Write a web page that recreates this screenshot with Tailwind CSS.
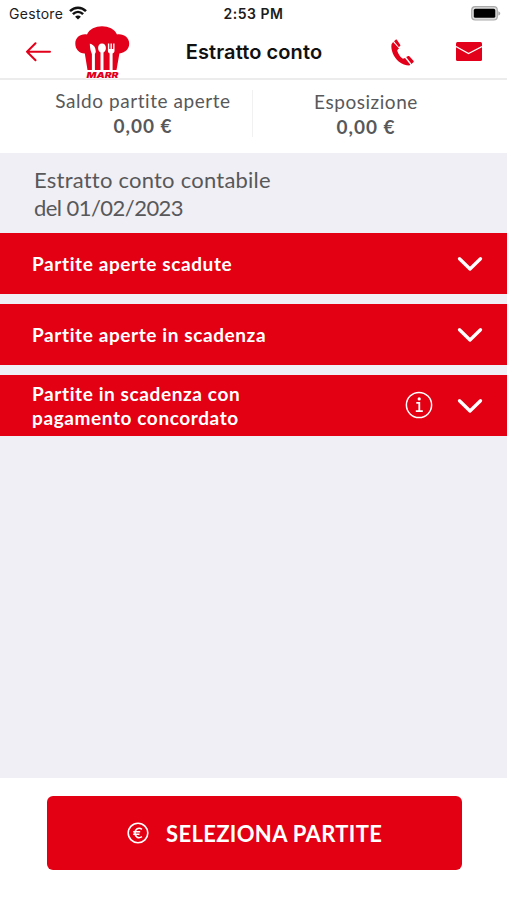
<!DOCTYPE html>
<html lang="it">
<head>
    <meta charset="UTF-8">
    <meta name="viewport" content="width=device-width, initial-scale=1.0">
    <title>Estratto conto</title>
    <script src="https://cdn.jsdelivr.net/npm/@tailwindcss/browser@4"></script>
</head>
<body class="bg-white w-full h-screen flex flex-col overflow-hidden font-['Lato',sans-serif] text-[#58585a]">

    <!-- Status bar -->
    <div class="h-[27px] shrink-0 grid grid-cols-3 items-center pl-[9px] pr-[6px] font-['Inter',sans-serif] text-[14px] leading-none text-[#1c1c1c]">
        <div class="flex items-center gap-[6px]">
            <span class="tracking-[0.3px]">Gestore</span>
            <svg class="w-[18px] h-[14px] -mt-[2px]" viewBox="0 0 18 14" fill="none" stroke="#111" stroke-width="2.5">
                <path d="M1 5.2C5.6.6 12.4.6 17 5.2"/>
                <path d="M3.900 8.200c3-2.900 7.200-2.900 10.200 0"/>
                <path d="M9 13.600 6.100 10.700c1.700-1.500 4.100-1.500 5.800 0z" fill="#111" stroke="none"/>
            </svg>
        </div>
        <div class="text-center font-semibold text-[14px] tracking-[0.500px] whitespace-nowrap -ml-[3px]">2:53 PM</div>
        <svg class="w-[30px] h-[15px] justify-self-end" viewBox="0 0 30 15">
            <rect x=".7" y=".7" width="25.6" height="13.3" rx="3.5" fill="#ddd" stroke="#aaa" stroke-width="1.2"/>
            <rect x="2.8" y="2.8" width="21.5" height="9" rx="1.6" fill="#000"/>
            <path d="M27.3 5.2c2.6.8 2.6 3.6 0 4.4z" fill="#aaa"/>
        </svg>
    </div>

    <!-- Header -->
    <header class="h-[53px] shrink-0 flex items-start border-b-2 border-[#ececec] pl-[25px] pr-[25px]">
        <svg class="w-[26px] h-[20px] mt-[15px]" viewBox="0 0 26 20" fill="none" stroke="#e2001a" stroke-width="2" stroke-linecap="round" stroke-linejoin="round">
            <path d="M25 9.700H2M10.500 1.300 2 9.700l8.500 8.500"/>
        </svg>
        <svg class="w-[56px] h-[54px] ml-[23px] -mt-[1px]" viewBox="0 0 56 54">
            <path fill="#e2001a" d="M13.500 44 10.800 27.500C5 27.500 1.300 23 1.300 17.500 1.300 11.500 6.500 7.500 13 8.500 15.500 3 21.500.3 28 .3s12.500 2.700 15 8.200c6.500-1 12.200 3 12.200 9 0 5.200-3.700 9.200-9.800 10L42.500 44Z"/>
            <g fill="#fff">
                <path d="M15.800 17.800c3.800.6 6 3.600 6 8.200l-.9 2V45h-3V28c-1.200-2.600-2-6-2.100-10.200Z"/>
                <path d="M28 17.500c2.500 0 3.900 2.100 3.900 4.500 0 2.200-1 3.900-2.400 4.500V45h-3V26.500c-1.400-.6-2.400-2.300-2.400-4.500 0-2.400 1.400-4.500 3.900-4.500Z"/>
                <path d="M33.900 17.500h1.400v5.500h1.200v-5.500h1.400v5.500h1.200v-5.500h1.400v7.200c0 1.300-.8 2.300-1.900 2.700V45h-3V27.400c-1-.4-1.700-1.400-1.700-2.700Z"/>
            </g>
            <text x="12.500" y="52" textLength="32" lengthAdjust="spacingAndGlyphs" font-family="Inter, sans-serif" font-size="7.800" font-weight="900" font-style="italic" fill="#e2001a" stroke="#fff" stroke-width="1" paint-order="stroke">MARR</text>
        </svg>
        <h1 class="w-[150px] ml-[49px] mt-[13px] text-center whitespace-nowrap font-['Inter',sans-serif] font-semibold text-[20px] leading-[25px] tracking-[0.100px] text-[#111]">Estratto conto</h1>
        <svg class="w-[25px] h-[29px] ml-[61px] mt-[11px]" viewBox="0 0 26 30" fill="#e2001a">
            <path d="M1.600 6.500C.5 12.500 4 20 9 24.300c3.500 3 7.500 4.200 11 4.200l1.200-.7-5.600-7.200-1.300.7c-1 .3-1.700 0-2.600-1-1.700-1.800-3.200-4.300-4-6.600-.3-1 0-1.600.7-2.100l1-.7L3.200 4.200Z"/>
            <path d="m4.200 3.400 1.700-1.600c.5-.4 1-.3 1.400.2l3.300 5c.4.6.2 1.100-.3 1.500l-1.200.9ZM16.800 19.800l1.700-1c.6-.4 1.100-.3 1.600.2l4.300 4.600c.5.5.4 1-.1 1.500L22.400 27Z"/>
        </svg>
        <svg class="w-[26px] h-[19px] ml-auto mt-[15px]" viewBox="0 0 26 19">
            <rect width="26" height="19" rx="1.500" fill="#e2001a"/>
            <path d="M0 4.500 12.500 11.500 26 4.500" fill="none" stroke="#fff" stroke-width="1.300"/>
        </svg>
    </header>

    <!-- Balances -->
    <section class="h-[73px] shrink-0 flex text-center leading-[25px] text-[19px]">
        <div class="w-[252px] pt-[8px] pl-[34px]">
            <div class="tracking-[0.550px]">Saldo partite aperte</div>
            <div class="font-bold tracking-[1px]">0,00 €</div>
        </div>
        <div class="w-px h-[47px] mt-[10px] bg-[#f1f1f1]"></div>
        <div class="flex-1 pt-[9px] pr-[28px]">
            <div class="tracking-[0.550px]">Esposizione</div>
            <div class="font-bold tracking-[1px]">0,00 €</div>
        </div>
    </section>

    <main class="flex-1 bg-[#f0eff5]">
        <h2 class="h-[80px] pt-[13px] pl-[34px] text-[22px] leading-[28px] tracking-[0.230px]">Estratto conto contabile<br><span class="tracking-[-0.550px]">del 01/02/2023</span></h2>

        <div class="flex flex-col gap-[10px] text-white font-bold text-[19px] leading-[24px] tracking-[0.600px]">
            <div class="h-[61px] bg-[#e30013] flex items-center pl-[32px] pr-[24px]">
                <span class="flex-1">Partite aperte scadute</span>
                <svg class="w-[26px] h-[16px]" viewBox="0 0 26 16" fill="none" stroke="#fff" stroke-width="3.300" stroke-linecap="round" stroke-linejoin="round"><path d="m2.500 2.700 10.500 10.300L23.500 2.700"/></svg>
            </div>
            <div class="h-[61px] bg-[#e30013] flex items-center pl-[32px] pr-[24px]">
                <span class="flex-1">Partite aperte in scadenza</span>
                <svg class="w-[26px] h-[16px]" viewBox="0 0 26 16" fill="none" stroke="#fff" stroke-width="3.300" stroke-linecap="round" stroke-linejoin="round"><path d="m2.500 2.700 10.500 10.300L23.500 2.700"/></svg>
            </div>
            <div class="h-[61px] bg-[#e30013] flex items-center pl-[32px] pr-[24px]">
                <span class="flex-1">Partite in scadenza con<br>pagamento concordato</span>
                <svg class="w-[28px] h-[28px] mr-[24px] -mt-[1px]" viewBox="0 0 28 28" fill="none" stroke="#fff" stroke-width="1.500">
                    <circle cx="14" cy="14" r="12.600"/>
                    <path d="M11.300 11.800h3v8.200M10.800 20.200h7" stroke-width="1.800"/>
                    <circle cx="14.200" cy="7.900" r="1.600" fill="#fff" stroke="none"/>
                </svg>
                <svg class="w-[26px] h-[16px]" viewBox="0 0 26 16" fill="none" stroke="#fff" stroke-width="3.300" stroke-linecap="round" stroke-linejoin="round"><path d="m2.500 2.700 10.500 10.300L23.500 2.700"/></svg>
            </div>
        </div>
    </main>

    <!-- Bottom action -->
    <footer class="h-[122px] shrink-0 pt-[18px] pl-[47px] pr-[45px]">
        <button class="w-full h-[74px] rounded-[6px] bg-[#e30013] text-white flex items-center pl-[79px]">
            <svg class="w-[24px] h-[24px] -mt-[1px]" viewBox="0 0 24 24" fill="none" stroke="#fff" stroke-width="1.600">
                <circle cx="12" cy="12" r="9.800"/>
                <path d="M16 8.300c-3.500-2.300-7-.3-7 3.700s3.500 6 7 3.700M7.200 10.700h7M7.200 13.200h6.300"/>
            </svg>
            <span class="ml-[16px] whitespace-nowrap font-bold text-[22px] tracking-[0.350px]">SELEZIONA PARTITE</span>
        </button>
    </footer>
</body>
</html>
